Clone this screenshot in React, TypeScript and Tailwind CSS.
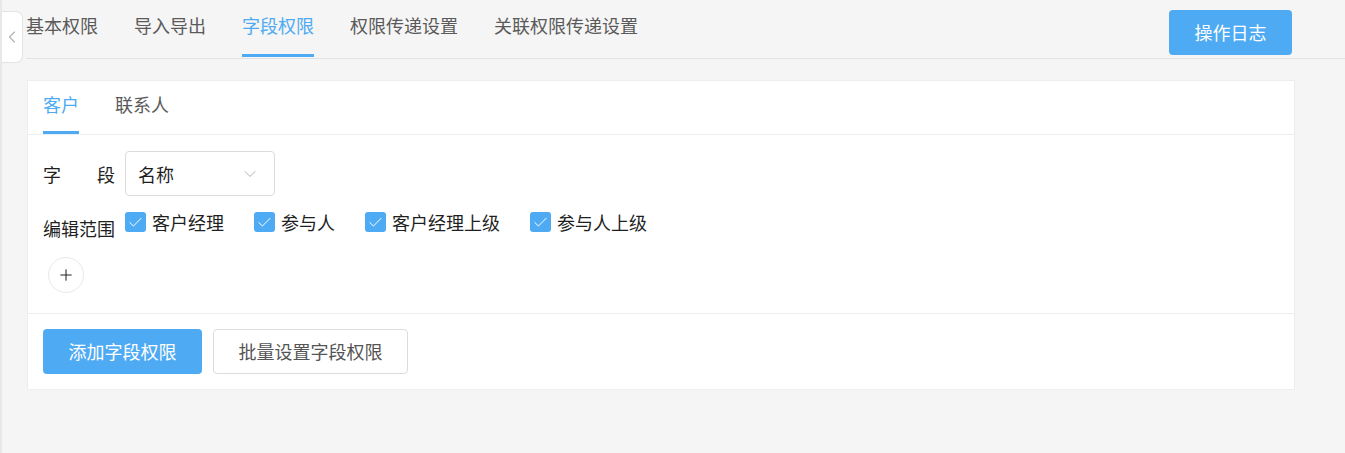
import { ChevronDown, ChevronLeft, Check, Plus } from 'lucide-react'

const topTabs = ['基本权限', '导入导出', '字段权限', '权限传递设置', '关联权限传递设置']
const scopes = ['客户经理', '参与人', '客户经理上级', '参与人上级']

export default function App() {
  return (
    <div
      className="relative h-[453px] w-full overflow-hidden border-l-2 border-[#e8e8e8] bg-[#f5f5f5] text-[18px]"
      style={{ fontFamily: '"Noto Sans CJK SC", "Noto Sans", sans-serif' }}
    >
      {/* collapse handle */}
      <div className="absolute left-0 top-[11px] flex h-[52px] w-[21px] items-center justify-center rounded-r-[7px] border border-l-0 border-[#e3e3e3] bg-white text-[#b0b0b0]">
        <ChevronLeft className="h-[20px] w-[20px]" strokeWidth={1.3} />
      </div>

      <div className="ml-[24px] flex h-[59px] items-start justify-between border-b border-[#e2e2e2]">
        <div className="flex gap-[36px]">
          {topTabs.map((tab, i) => (
            <div
              key={tab}
              className={`flex h-[57px] items-center border-b-[3px] pb-[5px] leading-none ${
                i === 2 ? 'border-[#4eaaf2] text-[#4eaaf2]' : 'border-transparent text-[#5a5a5a]'
              }`}
            >
              {tab}
            </div>
          ))}
        </div>
        <button className="mr-[53px] mt-[10px] h-[45px] w-[123px] rounded-[4px] bg-[#4eaaf2] text-white">操作日志</button>
      </div>

      <div className="ml-[25px] mt-[21px] w-[1268px] border border-[#eeeeee] bg-white">
        <div className="flex h-[54px] gap-[36px] border-b border-[#eeeeee] pl-[15px]">
          <div className="flex items-center border-b-[3px] border-[#4eaaf2] pb-[4px] leading-none text-[#4eaaf2]">客户</div>
          <div className="flex items-center border-b-[3px] border-transparent pb-[4px] leading-none text-[#5a5a5a]">联系人</div>
        </div>

        <div className="px-[15px] pb-[20px] pt-[16px] text-[#1f1f1f]">
          <div className="flex items-center">
            <div className="flex w-[72px] justify-between leading-none">
              <span>字</span>
              <span>段</span>
            </div>
            <div className="ml-[10px] flex h-[45px] w-[150px] items-center justify-between rounded-[4px] border border-[#dcdcdc] pl-[12px] pr-[14px]">
              <span className="leading-none">名称</span>
              <ChevronDown className="h-[20px] w-[20px] text-[#a8a8a8]" strokeWidth={1.1} />
            </div>
          </div>

          <div className="mt-[16px] flex items-start">
            <div className="mt-[7px] w-[72px] leading-none">编辑范围</div>
            <div className="ml-[10px] flex gap-[30px]">
              {scopes.map((s) => (
                <label key={s} className="flex items-center gap-[6px] leading-none">
                  <span className="flex h-[20px] w-[21px] items-center justify-center rounded-[3px] bg-[#4eaaf2] text-white">
                    <Check className="h-[17px] w-[17px]" strokeWidth={1.4} />
                  </span>
                  {s}
                </label>
              ))}
            </div>
          </div>

          <div className="ml-[5px] mt-[20px] flex h-[36px] w-[36px] items-center justify-center rounded-full border border-[#e8e8e8] text-[#222]">
            <Plus className="h-[18px] w-[18px]" strokeWidth={1.4} />
          </div>
        </div>

        <div className="flex gap-[11px] border-t border-[#eeeeee] px-[15px] pb-[15px] pt-[15px]">
          <button className="h-[45px] w-[159px] rounded-[4px] bg-[#4eaaf2] text-white">添加字段权限</button>
          <button className="h-[45px] w-[195px] rounded-[4px] border border-[#dcdcdc] bg-white text-[#555]">批量设置字段权限</button>
        </div>
      </div>
    </div>
  )
}
